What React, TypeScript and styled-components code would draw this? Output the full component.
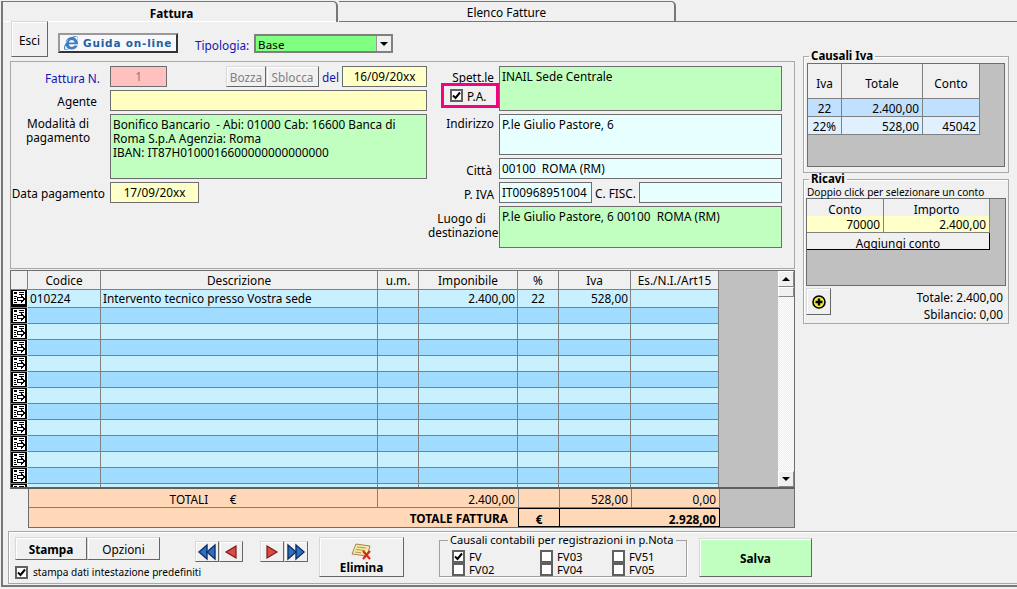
import React from 'react';
import styled, { createGlobalStyle } from 'styled-components';
import { FaInternetExplorer } from 'react-icons/fa';

const FONT = '"Noto Sans", "DejaVu Sans", sans-serif';

const GlobalStyle = createGlobalStyle`
  html, body {
    margin: 0;
    padding: 0;
    background: #f0f0f0;
  }
  * {
    box-sizing: border-box;
  }
`;

const Page = styled.div`
  width: 1017px;
  height: 589px;
  padding-left: 1px;
  overflow: hidden;
  background: #f0f0f0;
  color: #000;
  font-family: ${FONT};
  font-size: 11.8px;
  line-height: 14px;
`;

const TabBar = styled.div`
  display: flex;
  height: 22px;
  padding-top: 1px;
`;

const Tab = styled.div<{ $active?: boolean; $w: number }>`
  width: ${({ $w }) => $w}px;
  display: flex;
  align-items: center;
  justify-content: center;
  margin-left: ${({ $active }) => ($active ? 0 : 1)}px;
  padding-left: ${({ $active }) => ($active ? 4 : 0)}px;
  padding-top: ${({ $active }) => ($active ? 2 : 0)}px;
  border-top: 1px solid #777;
  border-right: 2px solid #777;
  border-left: ${({ $active }) => ($active ? '2px solid #777' : 'none')};
  border-bottom: ${({ $active }) => ($active ? 'none' : '1px solid #777')};
  border-top-right-radius: 5px;
  font-weight: ${({ $active }) => ($active ? 700 : 400)};
`;

const TabRest = styled.div`
  flex: 1;
  border-bottom: 1px solid #777;
`;

const Body = styled.div`
  height: 566px;
  border-left: 2px solid #777;
  border-bottom: 2px solid #777;
  border-top: 1px solid #fff;
  margin-top: -1px;
`;

const Upper = styled.div`
  display: flex;
  gap: 8px;
  height: 506px;
  padding-left: 7px;
`;

const LeftColumn = styled.div`
  width: 785px;
  display: flex;
  flex-direction: column;
`;

const RightColumn = styled.div`
  width: 206px;
  padding-top: 27px;
  display: flex;
  flex-direction: column;
`;

const Toolbar = styled.div`
  height: 39px;
  display: flex;
  align-items: flex-start;
`;

const Raised = styled.button<{ $w: number; $h: number; $bg?: string; $bold?: boolean }>`
  width: ${({ $w }) => $w}px;
  height: ${({ $h }) => $h}px;
  padding: 1px 0 0;
  flex: none;
  display: flex;
  align-items: center;
  justify-content: center;
  font: inherit;
  font-weight: ${({ $bold }) => ($bold ? 700 : 400)};
  color: #000;
  background: ${({ $bg }) => $bg || '#f0f0f0'};
  border: 1px solid;
  border-color: #d8d8d8 #666 #666 #d8d8d8;
  box-shadow: inset 1px 1px 0 #fff;
`;

const ExitButton = styled(Raised)`
  margin: -1px 0 0 1px;
`;

const GuideButton = styled.button`
  width: 120px;
  height: 20px;
  margin: 11px 0 0 10px;
  padding: 0 0 0 4px;
  display: flex;
  align-items: center;
  gap: 5px;
  background: #f6f8fc;
  border: 2px solid;
  border-color: #999 #333 #333 #999;
  font-family: "DejaVu Sans", sans-serif;
  font-size: 10.5px;
  font-weight: 700;
  letter-spacing: 0.8px;
  color: #26609f;
  svg {
    flex: none;
    color: #3f7fbf;
  }
`;

const TypeLabel = styled.span`
  margin: 16px 0 0 17px;
  width: 59px;
  color: #1414b4;
`;

const Combo = styled.div`
  width: 139px;
  height: 19px;
  margin-top: 12px;
  display: flex;
  align-items: stretch;
  border: 2px solid #808080;
  background: #80ff80;
`;

const ComboText = styled.span`
  flex: 1;
  padding: 2px 0 0 2px;
  font-size: 11.5px;
  letter-spacing: 0.2px;
`;

const ComboArrow = styled.span`
  width: 15px;
  display: flex;
  align-items: center;
  justify-content: center;
  background: #f0f0f0;
  border-left: 1px solid #999;
  &::after {
    content: '';
    border: 4px solid transparent;
    border-top: 4px solid #000;
    border-bottom: none;
  }
`;

const FormPanel = styled.div`
  height: 208px;
  display: flex;
  border: 1px solid #a8a8a8;
  padding-top: 4px;
`;

const LeftForm = styled.div`
  width: 417px;
  display: grid;
  grid-template-columns: 94px 317px;
  grid-template-rows: 21px 21px 65px 21px;
  column-gap: 5px;
  row-gap: 3px;
  align-content: start;
`;

const RightForm = styled.div`
  display: grid;
  grid-template-columns: 71px 283px;
  grid-template-rows: 45px 41px 21px 21px 42px;
  row-gap: 3px;
  align-content: start;
`;

const Label = styled.label<{ $pad?: number; $blue?: boolean; $center?: boolean; $top?: number }>`
  display: block;
  padding-right: ${({ $pad }) => $pad ?? 0}px;
  padding-top: ${({ $top }) => $top ?? 5}px;
  text-align: ${({ $center }) => ($center ? 'center' : 'right')};
  color: ${({ $blue }) => ($blue ? '#1414b4' : '#000')};
  white-space: nowrap;
`;

const Field = styled.div<{
  $bg: string;
  $w?: number;
  $align?: string;
  $muted?: boolean;
}>`
  width: ${({ $w }) => ($w ? `${$w}px` : 'auto')};
  flex: none;
  padding: 2px 2px 0;
  background: ${({ $bg }) => $bg};
  border: 1px solid #6e6e6e;
  text-align: ${({ $align }) => $align || 'left'};
  color: ${({ $muted }) => ($muted ? '#808080' : '#000')};
  white-space: pre-wrap;
`;

const FieldRow = styled.div`
  display: flex;
  align-items: stretch;
`;

const Spacer = styled.span`
  flex: 1;
`;

const DelLabel = styled.span`
  width: 23px;
  padding-top: 4px;
  text-align: center;
  color: #1414b4;
`;

const FlatButton = styled(Raised)`
  color: #808080;
`;

const SpettCell = styled.div`
  display: flex;
  flex-direction: column;
  align-items: flex-end;
`;

const SpettLabel = styled(Label)`
  height: 17px;
`;

const PaBox = styled.div`
  width: 58px;
  height: 25px;
  padding-left: 6px;
  display: flex;
  align-items: center;
  gap: 4px;
  border: 3px solid #f0047f;
`;

const CheckFrame = styled.span`
  width: 13px;
  height: 13px;
  flex: none;
  display: flex;
  align-items: center;
  justify-content: center;
  background: #fff;
  border: 2px solid #606060;
`;

const TaxLabel = styled.span`
  width: 47px;
  padding-top: 4px;
  text-align: center;
`;

const GridBox = styled.div`
  height: 258px;
  margin-top: 1px;
  display: flex;
  flex-direction: column;
`;

const GridTop = styled.div`
  height: 219px;
  display: flex;
  background: #c0c0c0;
  border: 1px solid #6e6e6e;
  border-bottom: 2px solid #606060;
`;

const GridTable = styled.div`
  width: 767px;
  overflow: hidden;
`;

const InvoiceRow = styled.div<{ $h: number }>`
  height: ${({ $h }) => $h}px;
  display: grid;
  grid-template-columns: 17px 73px 277px 41px 99px 41px 72px 88px;
`;

const Cell = styled.div<{ $bg: string; $align?: string }>`
  background: ${({ $bg }) => $bg};
  border-right: 1px solid #808080;
  border-bottom: 1px solid #808080;
  padding: 1px 2px 0;
  text-align: ${({ $align }) => $align || 'left'};
  white-space: nowrap;
`;

const HeadCell = styled(Cell)`
  padding-top: 2px;
`;

const RowMark = styled.div`
  display: flex;
  background: #000;
  border-bottom: 1px solid #808080;
  border-right: 1px solid #f0f0f0;
`;

const Scrollbar = styled.div`
  width: 16px;
  display: flex;
  flex-direction: column;
  background: repeating-conic-gradient(#fff 0 25%, #ececec 0 50%) 0 0 / 2px 2px;
`;

const ScrollButton = styled.div<{ $down?: boolean }>`
  height: 16px;
  display: flex;
  align-items: center;
  justify-content: center;
  background: #f0f0f0;
  border: 1px solid;
  border-color: #fff #888 #888 #fff;
  margin-top: ${({ $down }) => ($down ? 'auto' : 0)};
  &::after {
    content: '';
    border: 4px solid transparent;
    border-bottom: ${({ $down }) => ($down ? 'none' : '4px solid #000')};
    border-top: ${({ $down }) => ($down ? '4px solid #000' : 'none')};
  }
`;

const ScrollThumb = styled.div`
  height: 10px;
  background: #f0f0f0;
  border: 1px solid;
  border-color: #fff #888 #888 #fff;
`;

const TotalsBar = styled.div`
  height: 39px;
  margin-left: 18px;
  width: 767px;
  background: #c0c0c0;
  border: 1px solid #6e6e6e;
  border-top: none;
`;

const TotalsBlock = styled.div`
  width: 691px;
  display: grid;
  grid-template-columns: 349px 141px 41px 72px 88px;
  grid-template-rows: 19px 19px;
`;

const TotalCell = styled.div<{ $span?: number; $align?: string; $strong?: boolean }>`
  grid-column: span ${({ $span }) => $span || 1};
  padding: 3px 3px 0;
  background: #ffd8b8;
  text-align: ${({ $align }) => $align || 'right'};
  font-weight: ${({ $strong }) => ($strong ? 700 : 400)};
  border-bottom: 1px solid ${({ $strong }) => ($strong ? '#000' : '#808080')};
  border-right: 1px solid ${({ $strong }) => ($strong ? '#000' : '#808080')};
  border-top: ${({ $strong }) => ($strong ? '1px solid #000' : 'none')};
  white-space: pre;
`;

const TotalLabel = styled(TotalCell)`
  border-top: none;
  border-bottom: none;
  padding-right: 10px;
`;

const Group = styled.fieldset<{ $h: number; $gap?: number }>`
  height: ${({ $h }) => $h}px;
  margin: 0 0 ${({ $gap }) => $gap ?? 0}px;
  padding: 0 3px;
  min-width: 0;
  border: 1px solid #a8a8a8;
  box-shadow: inset 1px 1px 0 #fff;
`;

const GroupTitle = styled.legend`
  margin-left: 2px;
  padding: 0 2px;
  font-size: 11.5px;
  font-weight: 700;
  line-height: 14px;
`;

const VatBox = styled.div`
  height: 104px;
  background: #c0c0c0;
  border: 1px solid #6e6e6e;
`;

const VatRow = styled.div<{ $h: number }>`
  height: ${({ $h }) => $h}px;
  width: 172px;
  display: grid;
  grid-template-columns: 34px 81px 57px;
`;

const VatCell = styled.div<{ $bg: string; $align?: string }>`
  display: flex;
  align-items: center;
  justify-content: ${({ $align }) => $align || 'flex-end'};
  padding: 0 3px;
  background: ${({ $bg }) => $bg};
  border-right: 1px solid #808080;
  border-bottom: 1px solid #808080;
`;

const VatHead = styled(VatCell)`
  padding-top: 3px;
`;

const Hint = styled.div`
  margin-top: -1px;
  height: 13px;
  white-space: nowrap;
  font-size: 10.1px;
`;

const RevenueBox = styled.div`
  height: 88px;
  margin-left: -1px;
  background: #c0c0c0;
  border: 1px solid #6e6e6e;
  width: 200px;
`;

const RevenueRow = styled.div`
  height: 17px;
  width: 183px;
  display: grid;
  grid-template-columns: 77px 106px;
`;

const AddAccount = styled.div`
  width: 183px;
  height: 17px;
  padding-top: 3px;
  text-align: center;
  overflow: hidden;
  background: #f0f0f0;
  border-right: 1px solid #000;
  border-bottom: 1px solid #000;
`;

const RevenueFooter = styled.div`
  display: flex;
  justify-content: space-between;
  margin: 2px 2px 0 -1px;
`;

const Sums = styled.div`
  padding-top: 1px;
  text-align: right;
  line-height: 17px;
`;

const BottomBar = styled.div`
  height: 53px;
  margin: 3px 0 0 5px;
  display: flex;
  align-items: flex-start;
  padding-left: 6px;
  border: 1px solid #a8a8a8;
  border-right: none;
  box-shadow: inset 1px 1px 0 #fff;
`;

const PrintGroup = styled.div`
  width: 180px;
  padding-top: 5px;
`;

const ButtonPair = styled.div`
  display: flex;
`;

const PrintOption = styled.div`
  margin-top: 5px;
  display: flex;
  align-items: center;
  gap: 5px;
  white-space: nowrap;
  font-size: 10.1px;
`;

const NavPair = styled(ButtonPair)`
  margin-top: 9px;
`;

const NavGap = styled.span`
  width: 17px;
`;

const DeleteButton = styled(Raised)`
  margin: 5px 0 0 11px;
  flex-direction: column;
  padding-top: 2px;
  line-height: 14px;
`;

const ReasonGroup = styled.fieldset`
  width: 248px;
  height: 44px;
  min-width: 0;
  margin: 1px 0 0 35px;
  padding: 0 0 0 12px;
  border: 1px solid #a0a0a0;
  box-shadow: 1px 1px 0 #fff;
`;

const ReasonTitle = styled.legend`
  margin-left: -4px;
  padding: 0 2px;
  white-space: nowrap;
  font-size: 11.1px;
`;

const ReasonGrid = styled.div`
  display: grid;
  grid-template-columns: 88px 72px 60px;
  grid-auto-rows: 13px;
  margin-top: 3px;
`;

const ReasonItem = styled.div`
  display: flex;
  align-items: center;
  gap: 4px;
  line-height: 12px;
  font-size: 11.3px;
`;

const SaveButton = styled(Raised)`
  margin: 6px 0 0 12px;
`;

const Tick = () => (
  <svg width="9" height="9" viewBox="0 0 9 9">
    <path d="M1 4.5 L3.5 7 L8 1.5" fill="none" stroke="#000" strokeWidth="2" />
  </svg>
);

const RecordMark = () => (
  <svg width="16" height="15" viewBox="0 0 16 15" shapeRendering="crispEdges">
    <rect x="0" y="0" width="16" height="15" fill="#000" />
    <rect x="2" y="1" width="12" height="13" fill="#fff" />
    <path d="M3 2h3v2H3zM8 2h5v1H8zM8 4h5v1H8zM3 6h3v1H3zM3 8h2v1H3zM3 10h2v1H3zM3 12h3v1H3z" fill="#000" />
    <path d="M6 7h4V5h1l3 4-3 4h-1v-2H6z" fill="#000" />
    <path d="M7 8h4V7l1.5 2L11 11v-1H7z" fill="#fff" />
  </svg>
);

const ArrowGlyph = ({ fill, dark, flip, twin }: { fill: string; dark: string; flip?: boolean; twin?: boolean }) => (
  <svg width="20" height="18" viewBox="0 0 20 18" style={flip ? { transform: 'scaleX(-1)' } : undefined}>
    {twin ? (
      <>
        <path d="M10 2 L2 9 L10 16z" fill={fill} stroke={dark} strokeWidth="1.4" />
        <path d="M18 2 L10 9 L18 16z" fill={fill} stroke={dark} strokeWidth="1.4" />
      </>
    ) : (
      <path d="M15 3 L5 9 L15 15z" fill={fill} stroke={dark} strokeWidth="1.2" />
    )}
  </svg>
);

const PlusGlyph = () => (
  <svg width="14" height="14" viewBox="0 0 14 14">
    <circle cx="7" cy="7" r="6" fill="#f4ec3c" stroke="#000" strokeWidth="1.6" />
    <path d="M7 3.5v7M3.5 7h7" stroke="#000" strokeWidth="2.4" />
  </svg>
);

const DeleteGlyph = () => (
  <svg width="24" height="17" viewBox="0 0 24 17">
    <path d="M6 1 L20 3 L17 13 L2 11z" fill="#f8e8a0" stroke="#a08850" strokeWidth="1" />
    <path d="M7 4l9 1M6 6.5l9 1M5 9l6 .8" stroke="#b09860" strokeWidth="1" />
    <path d="M13 8l7 8M20 8l-7 8" stroke="#d8281c" strokeWidth="2.2" />
  </svg>
);

const COLUMNS = [
  { title: 'Codice', align: 'left' },
  { title: 'Descrizione', align: 'left' },
  { title: 'u.m.', align: 'center' },
  { title: 'Imponibile', align: 'right' },
  { title: '%', align: 'center' },
  { title: 'Iva', align: 'right' },
  { title: 'Es./N.I./Art15', align: 'center' },
];

const ROWS: string[][] = [
  ['010224', 'Intervento tecnico presso Vostra sede', '', '2.400,00', '22', '528,00', ''],
  ...Array.from({ length: 12 }, () => ['', '', '', '', '', '', '']),
];

const REASONS = [
  { code: 'FV', on: true },
  { code: 'FV03' },
  { code: 'FV51' },
  { code: 'FV02' },
  { code: 'FV04' },
  { code: 'FV05' },
];

const App = () => {
  return (
    <Page>
      <GlobalStyle />
      <TabBar>
        <Tab $active $w={337}>Fattura</Tab>
        <Tab $w={337}>Elenco Fatture</Tab>
        <TabRest />
      </TabBar>
      <Body>
        <Upper>
          <LeftColumn>
            <Toolbar>
              <ExitButton $w={37} $h={36}>Esci</ExitButton>
              <GuideButton>
                <FaInternetExplorer size={14} />
                Guida on-line
              </GuideButton>
              <TypeLabel>Tipologia:</TypeLabel>
              <Combo>
                <ComboText>Base</ComboText>
                <ComboArrow />
              </Combo>
            </Toolbar>

            <FormPanel>
              <LeftForm>
                <Label $blue $pad={5}>Fattura N.</Label>
                <FieldRow>
                  <Field $bg="#ffc0c0" $w={57} $align="center" $muted>1</Field>
                  <Spacer />
                  <FlatButton $w={40} $h={21}>Bozza</FlatButton>
                  <FlatButton $w={53} $h={21}>Sblocca</FlatButton>
                  <DelLabel>del</DelLabel>
                  <Field $bg="#ffffc8" $w={85} $align="center">16/09/20xx</Field>
                </FieldRow>

                <Label $pad={8} $top={4}>Agente</Label>
                <Field $bg="#ffffc0" />

                <Label $center $top={2}>Modalità di<br />pagamento</Label>
                <Field $bg="#c0ffc0">
                  Bonifico Bancario  - Abi: 01000 Cab: 16600 Banca di Roma S.p.A Agenzia: Roma{'\n'}
                  IBAN: IT87H0100016600000000000000
                </Field>

                <Label $top={4}>Data pagamento</Label>
                <FieldRow>
                  <Field $bg="#ffffc8" $w={89} $align="center">17/09/20xx</Field>
                </FieldRow>
              </LeftForm>

              <RightForm>
                <SpettCell>
                  <SpettLabel $pad={5} $top={4}>Spett.le</SpettLabel>
                  <PaBox>
                    <CheckFrame><Tick /></CheckFrame>
                    P.A.
                  </PaBox>
                </SpettCell>
                <Field $bg="#c0ffc0">INAIL Sede Centrale</Field>

                <Label $pad={5} $top={2}>Indirizzo</Label>
                <Field $bg="#e8ffff">P.le Giulio Pastore, 6</Field>

                <Label $pad={7}>Città</Label>
                <Field $bg="#e8ffff">00100  ROMA (RM)</Field>

                <Label $pad={5}>P. IVA</Label>
                <FieldRow>
                  <Field $bg="#e8ffff" $w={93}>IT00968951004</Field>
                  <TaxLabel>C. FISC.</TaxLabel>
                  <Field $bg="#e8ffff" $w={143} />
                </FieldRow>

                <Label $pad={4} $center>Luogo di<br />destinazione</Label>
                <Field $bg="#c0ffc0">P.le Giulio Pastore, 6 00100  ROMA (RM)</Field>
              </RightForm>
            </FormPanel>

            <GridBox>
              <GridTop>
                <GridTable>
                  <InvoiceRow $h={19}>
                    <HeadCell $bg="#f0f0f0" />
                    {COLUMNS.map((c) => (
                      <HeadCell key={c.title} $bg="#f0f0f0" $align="center">{c.title}</HeadCell>
                    ))}
                  </InvoiceRow>
                  {ROWS.map((row, i) => (
                    <InvoiceRow key={i} $h={i === 0 ? 18 : 16}>
                      <RowMark><RecordMark /></RowMark>
                      {row.map((text, j) => (
                        <Cell
                          key={j}
                          $bg={i % 2 === 0 ? '#c8f0ff' : '#a0dcff'}
                          $align={COLUMNS[j].align}
                        >
                          {text}
                        </Cell>
                      ))}
                    </InvoiceRow>
                  ))}
                </GridTable>
                <Scrollbar>
                  <ScrollButton />
                  <ScrollThumb />
                  <ScrollButton $down />
                </Scrollbar>
              </GridTop>
              <TotalsBar>
                <TotalsBlock>
                  <TotalCell $align="center">TOTALI       €</TotalCell>
                  <TotalCell>2.400,00</TotalCell>
                  <TotalCell />
                  <TotalCell>528,00</TotalCell>
                  <TotalCell>0,00</TotalCell>
                  <TotalLabel $strong $span={2}>TOTALE FATTURA</TotalLabel>
                  <TotalCell $strong $align="center">€</TotalCell>
                  <TotalCell $strong $span={2}>2.928,00</TotalCell>
                </TotalsBlock>
              </TotalsBar>
            </GridBox>
          </LeftColumn>

          <RightColumn>
            <Group $h={124} $gap={-1}>
              <GroupTitle>Causali Iva</GroupTitle>
              <VatBox>
                <VatRow $h={35}>
                  <VatHead $bg="#f0f0f0" $align="center">Iva</VatHead>
                  <VatHead $bg="#f0f0f0" $align="center">Totale</VatHead>
                  <VatHead $bg="#f0f0f0" $align="center">Conto</VatHead>
                </VatRow>
                <VatRow $h={18}>
                  <VatCell $bg="#c0e0ff" $align="center">22</VatCell>
                  <VatCell $bg="#c0e0ff">2.400,00</VatCell>
                  <VatCell $bg="#c0e0ff" />
                </VatRow>
                <VatRow $h={18}>
                  <VatCell $bg="#e0f0ff" $align="center">22%</VatCell>
                  <VatCell $bg="#e0f0ff">528,00</VatCell>
                  <VatCell $bg="#e0f0ff">45042</VatCell>
                </VatRow>
              </VatBox>
            </Group>
            <Group $h={152}>
              <GroupTitle>Ricavi</GroupTitle>
              <Hint>Doppio click per selezionare un conto</Hint>
              <RevenueBox>
                <RevenueRow>
                  <VatHead $bg="#f0f0f0" $align="center">Conto</VatHead>
                  <VatHead $bg="#f0f0f0" $align="center">Importo</VatHead>
                </RevenueRow>
                <RevenueRow>
                  <VatCell $bg="#ffffc8">70000</VatCell>
                  <VatCell $bg="#ffffc8">2.400,00</VatCell>
                </RevenueRow>
                <AddAccount>Aggiungi conto</AddAccount>
              </RevenueBox>
              <RevenueFooter>
                <Raised $w={25} $h={27}><PlusGlyph /></Raised>
                <Sums>
                  Totale: 2.400,00<br />
                  Sbilancio: 0,00
                </Sums>
              </RevenueFooter>
            </Group>
          </RightColumn>
        </Upper>

        <BottomBar>
          <PrintGroup>
            <ButtonPair>
              <Raised $w={72} $h={23} $bold>Stampa</Raised>
              <Raised $w={73} $h={23}>Opzioni</Raised>
            </ButtonPair>
            <PrintOption>
              <CheckFrame><Tick /></CheckFrame>
              stampa dati intestazione predefiniti
            </PrintOption>
          </PrintGroup>

          <NavPair>
            <Raised $w={24} $h={21}><ArrowGlyph fill="#2d6fc0" dark="#0d2f6a" twin /></Raised>
            <Raised $w={24} $h={21}><ArrowGlyph fill="#e04848" dark="#7a1a1a" /></Raised>
          </NavPair>
          <NavGap />
          <NavPair>
            <Raised $w={24} $h={21}><ArrowGlyph fill="#e04848" dark="#7a1a1a" flip /></Raised>
            <Raised $w={24} $h={21}><ArrowGlyph fill="#2d6fc0" dark="#0d2f6a" twin flip /></Raised>
          </NavPair>

          <DeleteButton $w={85} $h={40} $bold>
            <DeleteGlyph />
            Elimina
          </DeleteButton>

          <ReasonGroup>
            <ReasonTitle>Causali contabili per registrazioni in p.Nota</ReasonTitle>
            <ReasonGrid>
              {REASONS.map((r) => (
                <ReasonItem key={r.code}>
                  <CheckFrame>{r.on && <Tick />}</CheckFrame>
                  {r.code}
                </ReasonItem>
              ))}
            </ReasonGrid>
          </ReasonGroup>

          <SaveButton $w={113} $h={39} $bg="#c0ffc0" $bold>Salva</SaveButton>
        </BottomBar>
      </Body>
    </Page>
  );
};

export default App;
